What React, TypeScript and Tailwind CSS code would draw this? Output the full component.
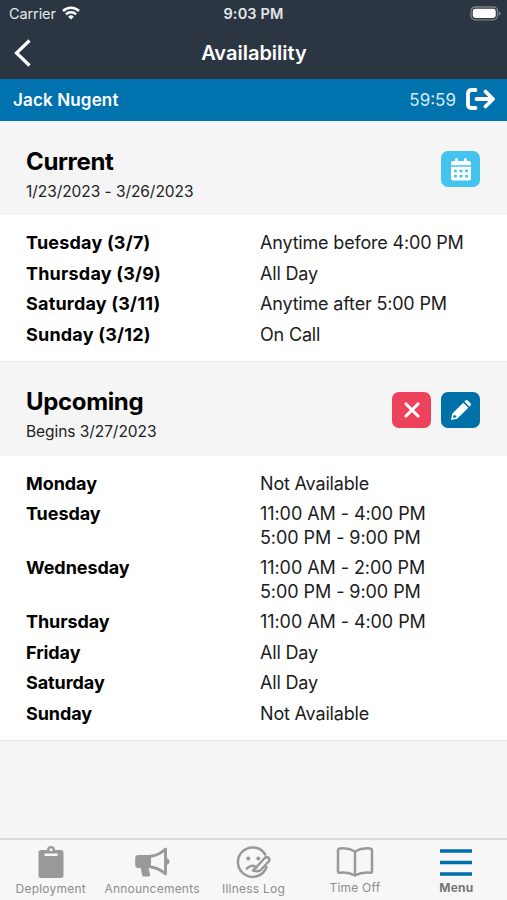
import type { ReactNode } from 'react'

type Day = { name: string; times: string[] }

const current: Day[] = [
  { name: 'Tuesday (3/7)', times: ['Anytime before 4:00 PM'] },
  { name: 'Thursday (3/9)', times: ['All Day'] },
  { name: 'Saturday (3/11)', times: ['Anytime after 5:00 PM'] },
  { name: 'Sunday (3/12)', times: ['On Call'] },
]

const upcoming: Day[] = [
  { name: 'Monday', times: ['Not Available'] },
  { name: 'Tuesday', times: ['11:00 AM - 4:00 PM', '5:00 PM - 9:00 PM'] },
  { name: 'Wednesday', times: ['11:00 AM - 2:00 PM', '5:00 PM - 9:00 PM'] },
  { name: 'Thursday', times: ['11:00 AM - 4:00 PM'] },
  { name: 'Friday', times: ['All Day'] },
  { name: 'Saturday', times: ['All Day'] },
  { name: 'Sunday', times: ['Not Available'] },
]

function StatusBar() {
  return (
    <div className="flex h-[27px] items-center px-[9px] text-[14.5px] text-[#e3e8ec]">
      <div className="flex flex-1 items-center gap-[6px]">
        <span className="tracking-[-0.1px]">Carrier</span>
        <svg width="18" height="14" viewBox="0 0 18 14" fill="none" stroke="#fff" strokeWidth="2.5" className="-mt-px">
          <path d="M1 5a11.6 11.6 0 0 1 16 0" />
          <path d="M3.9 8.3a7.4 7.4 0 0 1 10.2 0" />
          <path d="M9 13.6 6.1 10.7a4.2 4.2 0 0 1 5.8 0z" fill="#fff" stroke="none" />
        </svg>
      </div>
      <span className="font-semibold tracking-[0.15px]">9:03 PM</span>
      <div className="flex flex-1 justify-end">
        <svg width="32" height="15" viewBox="0 0 32 15" className="-mr-[4px]">
          <rect x="1" y="1" width="26.5" height="12.8" rx="4" fill="none" stroke="#7c848b" strokeWidth="1.3" />
          <rect x="2.8" y="2.8" width="22.9" height="9.2" rx="2.4" fill="#fff" />
          <path d="M28.8 5.2q1.8.8 1.8 2.2t-1.8 2.2z" fill="#7c848b" />
        </svg>
      </div>
    </div>
  )
}

function Section({ title, subtitle, days, children }: {
  title: string
  subtitle: string
  days: Day[]
  children: ReactNode
}) {
  return (
    <section>
      <div className="flex h-[94px] items-center justify-between bg-[#f5f5f5] pr-[27px] pl-[26px]">
        <div className="pt-[14px]">
          <h2 className="text-[24px] leading-[32px] font-bold tracking-[-0.35px]">{title}</h2>
          <p className="text-[15.5px] leading-[27px] tracking-[-0.06px] text-[#222]">{subtitle}</p>
        </div>
        <div className="flex gap-[10px] pt-[2px]">{children}</div>
      </div>
      <div className="flex flex-col gap-[7.15px] border-b border-[#e6e6e6] bg-white pt-4 pr-4 pb-[14.8px] pl-[26px] text-[18px] leading-[23.4px]">
        {days.map((day) => (
          <div key={day.name} className="flex">
            <div className={day.name.includes('(') ? 'w-[234px] font-bold tracking-[0.2px]' : 'w-[234px] font-bold tracking-[-0.07px]'}>
              {day.name}
            </div>
            <div className="text-[#1c1c1c]">
              {day.times.map((time) => (
                <div key={time} className={time.includes('-') ? 'tracking-[-0.07px]' : 'tracking-[-0.18px]'}>
                  {time}
                </div>
              ))}
            </div>
          </div>
        ))}
      </div>
    </section>
  )
}

function Tab({ label, active, raised, children }: {
  label: string
  active?: boolean
  raised?: boolean
  children: ReactNode
}) {
  return (
    <div className="flex flex-1 flex-col items-center whitespace-nowrap">
      <div className={raised ? 'flex h-[38px] items-center' : 'flex h-[39px] items-center'}>{children}</div>
      <span
        className={
          active
            ? 'text-[12px] leading-[16px] font-bold tracking-[0.2px] text-[#777]'
            : 'text-[12px] leading-[16px] tracking-[0.22px]'
        }
      >
        {label}
      </span>
    </div>
  )
}

export default function App() {
  return (
    <div className="flex h-[900px] w-[507px] flex-col overflow-hidden bg-[#f5f5f5] font-['Inter','Liberation_Sans',sans-serif] text-black">
      <header className="h-[79px] bg-[#2b3642] text-white">
        <StatusBar />
        <div className="flex h-[51px] items-center px-[14px]">
          <svg width="18" height="28" viewBox="0 0 18 28" fill="none" stroke="currentColor" strokeWidth="3.2">
            <path d="M15.5 1.5 2.5 14l13 12.5" />
          </svg>
          <h1 className="flex-1 pr-[17px] text-center text-[20px] font-semibold">Availability</h1>
        </div>
      </header>

      <div className="flex h-[42px] items-center bg-[#0073ae] pr-[12px] pl-[13px] text-[17px] text-white">
        <span className="flex-1 pt-px font-semibold tracking-[0.15px]">Jack Nugent</span>
        <span className="mr-[10px] pt-px text-[#d9eaf3]">59:59</span>
        <svg width="29" height="22" viewBox="0 0 29 22" fill="none" stroke="currentColor" strokeWidth="3.8" strokeLinecap="round" strokeLinejoin="round" className="-mt-[2px]">
          <path d="M9.5 2H5.5Q2 2 2 5.5v11Q2 20 5.5 20h4M10.5 11h16M19.5 3.5 27 11l-7.5 7.5" />
        </svg>
      </div>

      <Section title="Current" subtitle="1/23/2023 - 3/26/2023" days={current}>
        <button className="flex h-[36px] w-[39px] items-center justify-center rounded-[7px] bg-[#43c4ee] text-white">
          <svg width="20" height="23" viewBox="0 0 20 23" fill="currentColor">
            <path d="M4.2 3V1.2q0-1 1-1H6q1 0 1 1V3h6V1.2q0-1 1-1h.8q1 0 1 1V3H18q2 0 2 2v2.3H0V5q0-2 2-2z" />
            <path
              fillRule="evenodd"
              d="M0 8.7h20v11.8q0 2-2 2H2q-2 0-2-2zm3 3v2.6h2.8v-2.6zm5.6 0v2.6h2.8v-2.6zm5.6 0v2.6H17v-2.6zM3 17v2.6h2.8V17zm5.6 0v2.6h2.8V17zm5.6 0v2.6H17V17z"
            />
          </svg>
        </button>
      </Section>

      <Section title="Upcoming" subtitle="Begins 3/27/2023" days={upcoming}>
        <button className="flex h-[36px] w-[39px] items-center justify-center rounded-[7px] bg-[#ec425b] text-white">
          <svg width="16" height="16" viewBox="0 0 16 16" stroke="currentColor" strokeWidth="3.1" strokeLinecap="round">
            <path d="m2 2 12 12M14 2 2 14" />
          </svg>
        </button>
        <button className="flex h-[36px] w-[39px] items-center justify-center rounded-[7px] bg-[#0070a9] text-white">
          <svg width="20" height="20" viewBox="0 0 20 20" fill="currentColor">
            <path d="m13.3 1.5 1-.9q1.300-1.100 2.600.1l2.400 2.400q1.200 1.300.1 2.600l-.9 1z" />
            <path fillRule="evenodd" d="m12.200 2.700 5.100 5.100L6.200 18.800 0 20l1.200-6.200zM2.700 14.800 2 18l3.200-.7v-1.800H3.500z" />
          </svg>
        </button>
      </Section>

      <nav className="mt-auto flex h-[62px] border-t-2 border-[#dadada] bg-[#f7f7f7] pt-[2px] text-[#8d8d8d]">
        <Tab label="Deployment">
          <svg width="26" height="34" viewBox="0 0 26 34" className="ml-px">
            <path
              fillRule="evenodd"
              fill="#999"
              d="M3 5h6a4 4 0 0 1 8 0h6q2.5 0 2.5 2.5v23q0 2.5-2.5 2.5H3q-2.5 0-2.5-2.5v-23Q.5 5 3 5zm10-1.8a1.5 1.5 0 1 0 0 3 1.5 1.5 0 0 0 0-3zM6.5 8.5v2.5h13V8.5z"
            />
          </svg>
        </Tab>
        <Tab label="Announcements">
          <svg width="36" height="32" viewBox="0 0 36 32" fill="#999">
            <path d="M4.5 9H17v13h-2.500l1.600 6.500q.4 2-1.500 2H10q-1.600 0-1.900-1.500L6.800 22H4.500q-3.300 0-3.300-3v-7q0-3 3.300-3z" />
            <path d="M16 10.300Q25 9.500 31.500 3v25q-6.500-6-15.500-7.300" fill="none" stroke="#999" strokeWidth="2.9" strokeLinejoin="round" />
            <path d="M32.5 12q3 1 3 3.500t-3 3.500z" />
          </svg>
        </Tab>
        <Tab label="Illness Log">
          <svg width="36" height="34" viewBox="0 0 36 34" fill="none" stroke="#999" strokeWidth="2.5" strokeLinecap="round" strokeLinejoin="round" className="ml-px">
            <path d="M29.2 9.500A14.700 14.700 0 1 0 30.500 22" />
            <path d="M11 23.500q5-5 9.500-1" />
            <circle cx="12.3" cy="13.5" r=".8" fill="#999" />
            <circle cx="22.3" cy="13.5" r=".8" fill="#999" />
            <path d="m20.500 22 8.300-9q1.800-1.600 3.600-.2t.3 3.700l-8 8.500q-2.700 2.200-7.700.5l3.500-3.500" />
          </svg>
        </Tab>
        <Tab label="Time Off" raised>
          <svg width="38" height="30" viewBox="0 0 38 30" fill="none" stroke="#999" strokeWidth="2.5" strokeLinejoin="round" className="mt-[2px]">
            <path d="M19 4.5Q12 .5 4 1.5q-2 .3-2 2V24q0 2 2 1.7 8-1 15 2.800 7-3.800 15-2.800 2 .3 2-1.700V3.500q0-1.700-2-2-8-1-15 3zV28" />
          </svg>
        </Tab>
        <Tab label="Menu" active raised>
          <svg width="32" height="27" viewBox="0 0 32 27" stroke="#0070a9" strokeWidth="3.6" className="mt-[2px]">
            <path d="M0 2h32M0 13.500h32M0 25h32" />
          </svg>
        </Tab>
      </nav>
    </div>
  )
}
